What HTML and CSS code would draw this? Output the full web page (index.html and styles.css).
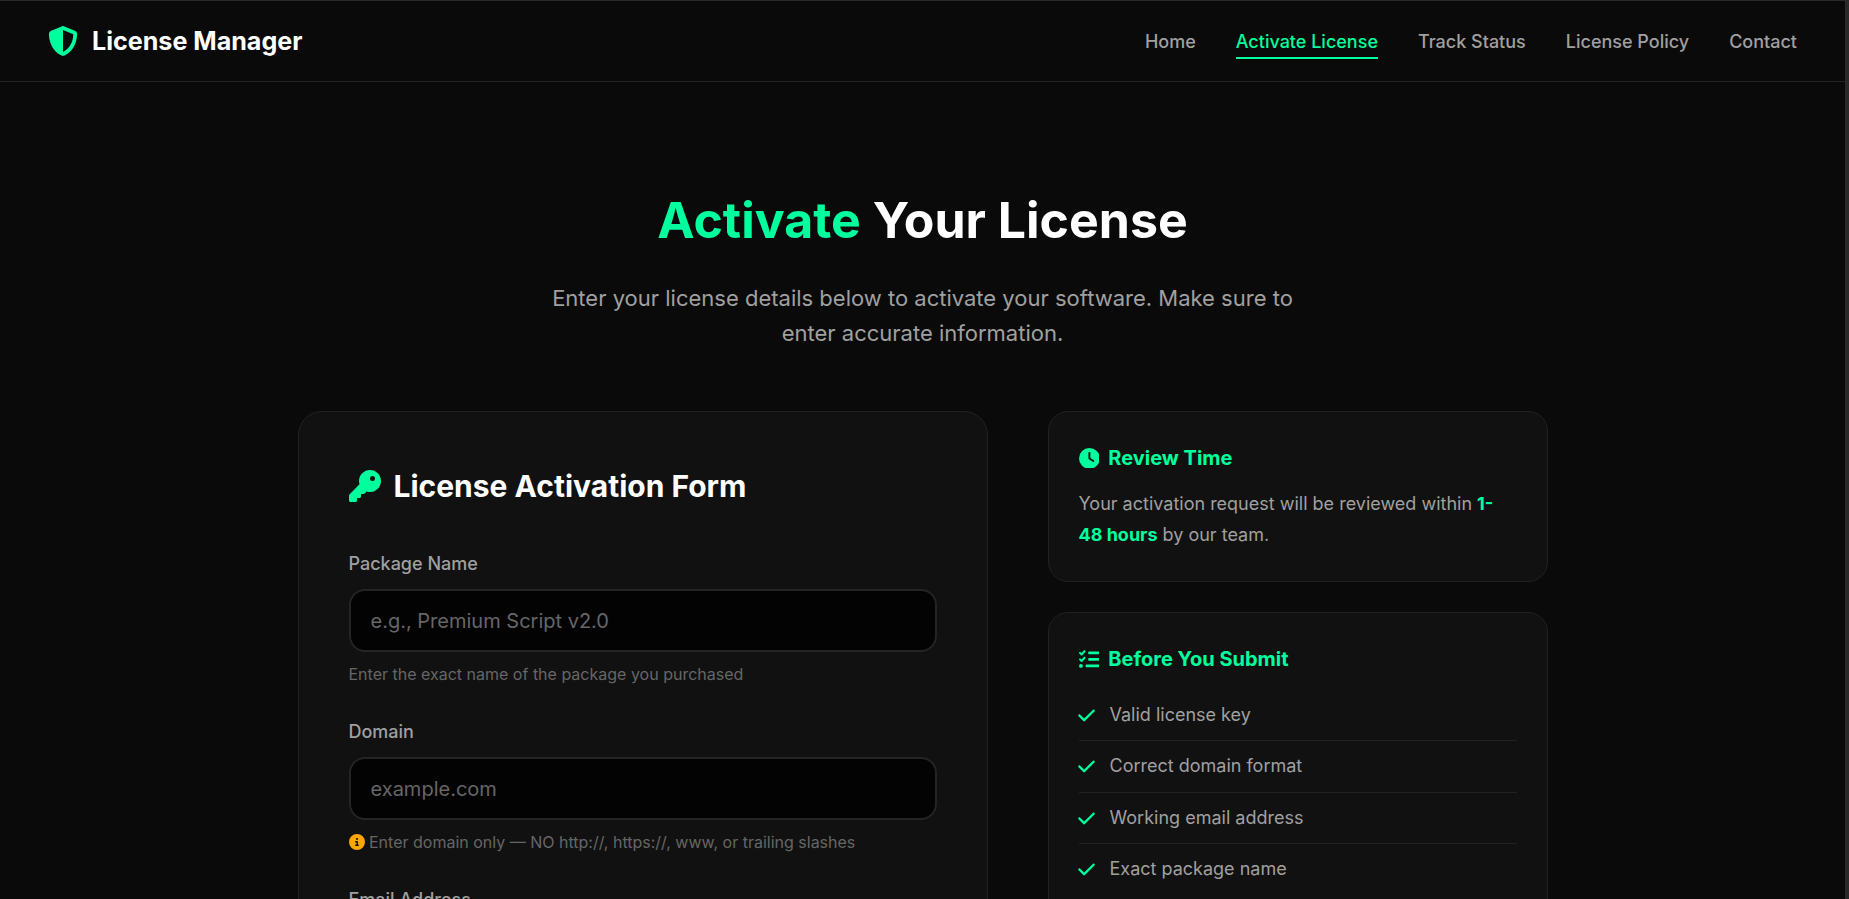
FILE: index.html
```html
<!DOCTYPE html>
<html lang="en">
<head>
<meta charset="utf-8">
<title>License Manager</title>
<link rel="stylesheet" href="styles.css">
</head>
<body>
<div class="page">
  <header class="nav">
    <a class="logo" href="#">
      <svg class="logo-icon" viewBox="0 0 512 512"><path d="M256 0c4.6 0 9.2 1 13.4 2.9L457.7 82.8c22 9.3 38.4 31 38.3 57.2c-.5 99.2-41.3 280.7-213.6 363.2c-16.7 8-36.1 8-52.8 0C57.3 420.7 16.5 239.2 16 140c-.1-26.2 16.3-47.9 38.3-57.2L242.7 2.9C246.8 1 251.4 0 256 0zm0 66.8V444.8C394 378 431.1 230.1 432 141.4L256 66.8l0 0z"/></svg>
      <span>License Manager</span>
    </a>
    <nav class="links">
      <a href="#">Home</a>
      <a class="active" href="#">Activate License</a>
      <a href="#">Track Status</a>
      <a href="#">License Policy</a>
      <a href="#">Contact</a>
    </nav>
  </header>

  <section class="hero">
    <h1><span class="accent">Activate</span> Your License</h1>
    <p>Enter your license details below to activate your software. Make sure to enter accurate information.</p>
  </section>

  <main class="columns">
    <section class="card form-card">
      <h2 class="form-title">
        <svg class="key-icon" viewBox="0 0 512 512"><path d="M336 352c97.2 0 176-78.8 176-176S433.2 0 336 0S160 78.8 160 176c0 18.7 2.9 36.8 8.3 53.7L7 391c-4.5 4.5-7 10.6-7 17v80c0 13.3 10.7 24 24 24h80c13.3 0 24-10.7 24-24V448h40c13.3 0 24-10.7 24-24V384h40c6.4 0 12.5-2.5 17-7l33.3-33.3c16.9 5.4 35 8.3 53.7 8.3zM376 96a40 40 0 1 1 0 80 40 40 0 1 1 0-80z"/></svg>
        License Activation Form
      </h2>
      <div class="field">
        <label for="pkg">Package Name</label>
        <input id="pkg" type="text" placeholder="e.g., Premium Script v2.0">
        <small>Enter the exact name of the package you purchased</small>
      </div>
      <div class="field">
        <label for="dom">Domain</label>
        <input id="dom" type="text" placeholder="example.com">
        <small class="warn"><svg class="info-icon" viewBox="0 0 512 512"><path d="M256 512A256 256 0 1 0 256 0a256 256 0 1 0 0 512zM216 336h24V272H216c-13.3 0-24-10.7-24-24s10.7-24 24-24h48c13.3 0 24 10.7 24 24v88h8c13.3 0 24 10.7 24 24s-10.7 24-24 24H216c-13.3 0-24-10.7-24-24s10.7-24 24-24zm40-208a32 32 0 1 1 0 64 32 32 0 1 1 0-64z"/></svg> Enter domain only — NO http://, https://, www, or trailing slashes</small>
      </div>
      <div class="field">
        <label for="mail">Email Address</label>
        <input id="mail" type="email" placeholder="you@example.com">
      </div>
    </section>

    <aside class="side">
      <section class="card side-card">
        <h3>
          <svg class="side-icon" viewBox="0 0 512 512"><path d="M256 0a256 256 0 1 1 0 512A256 256 0 1 1 256 0zM232 120V256c0 8 4 15.5 10.7 20l96 64c11 7.4 25.9 4.4 33.3-6.7s4.4-25.9-6.7-33.3L280 243.2V120c0-13.3-10.7-24-24-24s-24 10.7-24 24z"/></svg>
          Review Time
        </h3>
        <p>Your activation request will be reviewed within <strong>1-48 hours</strong> by our team.</p>
      </section>
      <section class="card side-card">
        <h3>
          <svg class="side-icon" viewBox="0 0 512 512"><path d="M152.1 38.2c9.9 8.9 10.7 24 1.8 33.9l-72 80c-4.4 4.9-10.6 7.8-17.2 7.9s-12.9-2.4-17.6-7L7 113C-2.3 103.6-2.3 88.4 7 79s24.6-9.4 33.9 0l22.1 22.1 55.1-61.2c8.9-9.9 24-10.7 33.9-1.8zm0 160c9.9 8.9 10.7 24 1.8 33.9l-72 80c-4.4 4.9-10.6 7.8-17.2 7.9s-12.9-2.4-17.6-7L7 273c-9.4-9.4-9.4-24.6 0-33.9s24.6-9.4 33.9 0l22.1 22.1 55.1-61.2c8.9-9.9 24-10.7 33.9-1.8zM224 96c0-17.7 14.3-32 32-32H480c17.7 0 32 14.3 32 32s-14.3 32-32 32H256c-17.7 0-32-14.3-32-32zm0 160c0-17.7 14.3-32 32-32H480c17.7 0 32 14.3 32 32s-14.3 32-32 32H256c-17.7 0-32-14.3-32-32zM160 416c0-17.7 14.3-32 32-32H480c17.7 0 32 14.3 32 32s-14.3 32-32 32H192c-17.7 0-32-14.3-32-32zM48 368a48 48 0 1 1 0 96 48 48 0 1 1 0-96z"/></svg>
          Before You Submit
        </h3>
        <ul class="checks">
          <li><svg class="check-icon" viewBox="0 0 448 512"><path d="M438.6 105.4c12.5 12.5 12.5 32.8 0 45.3l-256 256c-12.5 12.5-32.8 12.5-45.3 0l-128-128c-12.5-12.5-12.5-32.8 0-45.3s32.8-12.5 45.3 0L160 338.7 393.4 105.4c12.5-12.5 32.8-12.5 45.3 0z"/></svg>Valid license key</li>
          <li><svg class="check-icon" viewBox="0 0 448 512"><path d="M438.6 105.4c12.5 12.5 12.5 32.8 0 45.3l-256 256c-12.5 12.5-32.8 12.5-45.3 0l-128-128c-12.5-12.5-12.5-32.8 0-45.3s32.8-12.5 45.3 0L160 338.7 393.4 105.4c12.5-12.5 32.8-12.5 45.3 0z"/></svg>Correct domain format</li>
          <li><svg class="check-icon" viewBox="0 0 448 512"><path d="M438.6 105.4c12.5 12.5 12.5 32.8 0 45.3l-256 256c-12.5 12.5-32.8 12.5-45.3 0l-128-128c-12.5-12.5-12.5-32.8 0-45.3s32.8-12.5 45.3 0L160 338.7 393.4 105.4c12.5-12.5 32.8-12.5 45.3 0z"/></svg>Working email address</li>
          <li><svg class="check-icon" viewBox="0 0 448 512"><path d="M438.6 105.4c12.5 12.5 12.5 32.8 0 45.3l-256 256c-12.5 12.5-32.8 12.5-45.3 0l-128-128c-12.5-12.5-12.5-32.8 0-45.3s32.8-12.5 45.3 0L160 338.7 393.4 105.4c12.5-12.5 32.8-12.5 45.3 0z"/></svg>Exact package name</li>
        </ul>
      </section>
    </aside>
  </main>
</div>
</body>
</html>
```

FILE: styles.css
```css
* { box-sizing: border-box; }
html, body { margin: 0; height: 100%; overflow: hidden; }
body {
  background: #0a0a0a;
  color: #a0a0a0;
  font-family: "Inter", "Liberation Sans", sans-serif;
  line-height: 1.6;
  border-top: 1px solid #2a2a2a;
  border-right: 4px solid #2a2a2a;
}
a { text-decoration: none; color: inherit; }
svg { fill: currentColor; flex: none; display: block; }

.nav {
  height: 81px;
  padding: 0 48px;
  display: flex;
  align-items: center;
  justify-content: space-between;
  border-bottom: 1px solid #222;
}
.logo { display: flex; align-items: center; gap: 14px; color: #fff; font-size: 25.1px; font-weight: 700; }
.logo-icon { width: 30px; height: 30px; color: #00ff9d; }
.links { display: flex; gap: 40px; }
.links a { font-size: 18px; font-weight: 500; color: #a0a0a0; padding: 7px 0 5px; border-bottom: 2px solid transparent; line-height: 21px; }
.links a.active { color: #00ff9d; border-bottom-color: #00ff9d; }

.hero { text-align: center; padding-top: 96px; }
.hero h1 { margin: 0; font-size: 50px; font-weight: 700; color: #fff; line-height: 84px; }
.accent { color: #00ff9d; }
.hero p { margin: 19px auto 0; width: 768px; font-size: 22px; line-height: 35px; color: #a0a0a0; }

.columns {
  width: 1250px;
  margin: 60px auto 0;
  display: flex;
  gap: 60px;
  align-items: flex-start;
}
.card { background: #111; border: 1px solid #222; }
.form-card { width: 690px; padding: 50px; border-radius: 24px; }
.form-title { margin: 0 0 40px; display: flex; align-items: center; gap: 13px; font-size: 30px; font-weight: 700; color: #fff; line-height: 48px; }
.key-icon { width: 32px; height: 32px; color: #00ff9d; }

.field { margin-bottom: 32px; }
.field label { display: block; font-size: 18px; font-weight: 500; color: #a0a0a0; line-height: 28px; margin-bottom: 11px; }
.field input {
  display: block;
  width: 100%;
  height: 63px;
  padding: 0 20px;
  background: #030303;
  border: 2px solid #242424;
  border-radius: 16px;
  font: 400 20px "Inter", "Liberation Sans", sans-serif;
  color: #fff;
  outline: none;
}
.field input::placeholder { color: #666; opacity: 1; }
.field small { display: block; margin-top: 10px; font-size: 16px; line-height: 24px; color: #666; }
.info-icon { display: inline-block; width: 16px; height: 16px; color: #ffa502; vertical-align: -2px; }

.side { width: 500px; display: flex; flex-direction: column; gap: 30px; }
.side-card { padding: 30px; border-radius: 20px; }
.side-card h3 { margin: 0 0 14px; display: flex; align-items: center; gap: 9px; font-size: 20px; font-weight: 700; color: #00ff9d; line-height: 32px; }
.side-icon { width: 20.8px; height: 20.8px; }
.side-card p { margin: 0 0 1px; font-size: 18px; line-height: 31px; color: #a0a0a0; }
.side-card strong { color: #00ff9d; font-weight: 700; }

.checks { list-style: none; margin: 15px 0 0; padding: 0; }
.checks li { display: flex; align-items: center; gap: 15px; padding: 12px 0; font-size: 18px; line-height: 26.4px; border-bottom: 1px solid #222; }
.checks li:last-child { border-bottom: 0; }
.check-icon { width: 17px; height: 19px; color: #00ff9d; margin-left: -1px; }
```
